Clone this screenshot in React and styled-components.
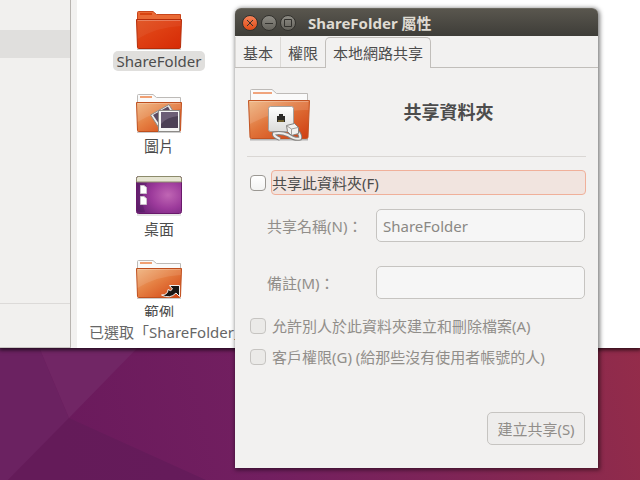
import React, { useState } from "react";
import styled, { createGlobalStyle, css } from "styled-components";

const GlobalStyle = createGlobalStyle`
  * {
    box-sizing: border-box;
  }

  html,
  body,
  #root {
    height: 100%;
  }

  body {
    margin: 0;
    overflow: hidden;
  }

  svg {
    flex: none;
  }

  body,
  button,
  input {
    font-family: "Noto Sans", "Noto Sans CJK TC", sans-serif;
    font-size: 15px;
    line-height: 20px;
    color: #4c4c4c;
  }
`;

const Desktop = styled.main`
  position: relative;
  min-height: 100%;
  overflow: hidden;
  background-color: #6b1b5d;
`;

const WallpaperSvg = styled.svg`
  position: absolute;
  width: 100%;
  height: 100%;
`;

/* file manager */

const FilesWindow = styled.section`
  position: absolute;
  top: 0;
  left: 0;
  right: 0;
  height: 348px;
  display: flex;
  background-color: #ffffff;
  box-shadow: 0 1px 4px 1px rgba(0, 0, 0, 0.7);
`;

const Sidebar = styled.nav`
  width: 71px;
  display: flex;
  flex-direction: column;
  padding-top: 30px;
  background-color: #f1f0ee;
  border-right: 1px solid #b8b4b0;
  border-bottom: 1px solid #c8c5c2;
`;

const SidebarRow = styled.div`
  height: 28px;
  background-color: #e0dfdd;
`;

const SidebarFooter = styled.div`
  height: 44px;
  margin-top: auto;
  border-top: 1px solid #dcdad8;
`;

const PaneHandle = styled.div`
  width: 6px;
  background-color: #f2f1f0;
`;

const FilesPane = styled.div`
  flex: 1;
  min-width: 0;
  display: flex;
  flex-direction: column;
`;

const IconView = styled.ul`
  flex: 1;
  min-height: 0;
  width: 164px;
  display: flex;
  flex-direction: column;
  gap: 21px;
  margin: 0;
  padding: 9px 0 0;
  overflow: hidden;
  list-style: none;
`;

const FileItem = styled.li`
  flex: none;
  height: 62px;
  display: flex;
  flex-direction: column;
  align-items: center;
`;

const FileLabel = styled.span`
  flex: none;
  padding: 0 4px;
  border-radius: 5px;
  line-height: 25px;

  ${({ $selected }) =>
    $selected &&
    css`
      line-height: 20px;
      background-color: #e0dfdd;
    `}
`;

const StatusBar = styled.div`
  height: 31px;
  padding: 5px 12px;
  color: #666666;
  white-space: nowrap;
`;

/* properties dialog */

const Dialog = styled.section`
  position: absolute;
  top: 8px;
  left: 235px;
  width: 363px;
  border-radius: 6px 6px 0 0;
  background-color: #f2f1f0;
  box-shadow: 1px 1px 4px 1px rgba(0, 0, 0, 0.5);
`;

const TitleBar = styled.header`
  height: 28px;
  display: flex;
  align-items: center;
  gap: 3px;
  padding: 0 7px;
  border-radius: 6px 6px 0 0;
  border-top: 1px solid #6a675e;
  background: linear-gradient(#59564e, #3e3d38);
`;

const WindowButton = styled.button`
  width: 16px;
  height: 16px;
  display: flex;
  padding: 0;
  border: 1px solid #33322e;
  border-radius: 50%;
  background: ${({ $close }) =>
    $close
      ? "linear-gradient(#f58258, #df4b16)"
      : "linear-gradient(#8d8b84, #65635c)"};
`;

const Title = styled.h1`
  margin: 0 0 0 9px;
  font-size: 15px;
  line-height: 20px;
  font-weight: bold;
  color: #dfdbd2;
`;

const TabList = styled.div`
  height: 32px;
  display: flex;
  align-items: flex-end;
  border-bottom: 1px solid #c1beba;
`;

const Tab = styled.button`
  height: 30px;
  padding: 2px 7px 0;
  border: solid #dbd9d6;
  border-width: 0 0 0 1px;
  background: none;

  ${({ $active }) =>
    $active &&
    css`
      height: 31px;
      margin-bottom: -1px;
      padding: 0 7px;
      border: 1px solid #c1beba;
      border-bottom: 0;
      border-radius: 5px 5px 0 0;
      background-color: #f2f1f0;
    `}
`;

const Panel = styled.form`
  display: flex;
  flex-direction: column;
  padding: 18px 12px 23px;
`;

const Intro = styled.div`
  display: flex;
  align-items: center;
  padding-bottom: 10px;
  border-bottom: 1px solid #dad7d4;
  margin-bottom: 13px;
`;

const Heading = styled.h2`
  flex: 1;
  margin: 0;
  padding-bottom: 8px;
  font-size: 18px;
  line-height: 24px;
  text-align: center;
`;

const CheckRow = styled.div`
  display: flex;
  align-items: center;
  gap: 5px;
  height: ${({ $short }) => ($short ? "25px" : "31px")};
  padding-left: 3px;
`;

const CheckBox = styled.input`
  appearance: none;
  flex: none;
  width: 16px;
  height: 16px;
  margin: 0;
  border: 1px solid #9b9893;
  border-radius: 4px;
  background: linear-gradient(#ffffff, #f3f3f2);

  &:checked {
    background: #f07746;
  }

  &:disabled {
    border-color: #c6c4c1;
    background: #ebeae8;
  }
`;

const CheckLabel = styled.label`
  flex: 1;
  padding: 2px 0 1px;
  border: 1px solid transparent;
  border-radius: 4px;
  white-space: nowrap;

  ${({ $focused }) =>
    $focused &&
    css`
      border-color: #f0b09a;
      background-color: #f1e4df;
    `}

  ${({ $disabled }) => $disabled && "color: #918e8a;"}
`;

const Fields = styled.div`
  display: grid;
  grid-template-columns: 109px 1fr;
  align-items: center;
  row-gap: 24px;
  padding: 14px 1px 11px 20px;
`;

const FieldLabel = styled.label`
  padding-top: 1px;
  color: #918e8a;
`;

const TextField = styled.input`
  width: 100%;
  height: 33px;
  padding: 0 6px;
  border: 1px solid #c6c4c1;
  border-radius: 5px;
  background-color: #f6f6f6;
  color: #8a8884;
`;

const Actions = styled.div`
  display: flex;
  justify-content: flex-end;
  padding: 40px 1px 0;
`;

const ActionButton = styled.button`
  min-width: 98px;
  height: 33px;
  padding: 1px 8px 0;
  border: 1px solid #c6c4c1;
  border-radius: 5px;
  background-color: #eeedec;

  &:disabled {
    color: #918e8a;
  }
`;

const Wallpaper = () => (
  <WallpaperSvg viewBox="0 0 640 480" preserveAspectRatio="none" aria-hidden="true">
    <defs>
      <linearGradient id="wall" x1="70" y1="480" x2="640" y2="340" gradientUnits="userSpaceOnUse">
        <stop offset="0" stopColor="#6a1a5c" />
        <stop offset="0.33" stopColor="#721f60" />
        <stop offset="0.6" stopColor="#7d2458" />
        <stop offset="0.8" stopColor="#87284f" />
        <stop offset="1" stopColor="#942c4a" />
      </linearGradient>
      <linearGradient id="wallLow" x1="60" y1="0" x2="500" y2="0" gradientUnits="userSpaceOnUse">
        <stop offset="0" stopColor="#641b59" />
        <stop offset="0.5" stopColor="#661b5b" />
        <stop offset="1" stopColor="#84275a" />
      </linearGradient>
    </defs>
    <rect width="640" height="480" fill="url(#wall)" />
    <path d="M0 340H36L69 418L8 480H0Z" fill="#6b2261" />
    <path d="M36 340H145L69 418Z" fill="#712665" />
    <path d="M69 418L8 480H206Z" fill="url(#wallLow)" />
  </WallpaperSvg>
);

const FolderShape = ({ red }) => {
  const id = red ? "red" : "orange";
  return (
    <>
      <defs>
        <linearGradient id={id} x1="0" y1="0" x2="1" y2="1">
          <stop offset="0" stopColor={red ? "#e0501e" : "#eeb27c"} />
          <stop offset="0.45" stopColor={red ? "#de3f12" : "#e57f42"} />
          <stop offset="1" stopColor={red ? "#d62a06" : "#d24212"} />
        </linearGradient>
      </defs>
      <path d="M2 40.5H46" stroke="#000" strokeOpacity="0.2" />
      <path
        d="M2.5 12V3.5Q2.5 2.5 3.5 2.5H18L21.5 5.5H45.5V12Z"
        fill={red ? "#ea6a35" : "#fafafa"}
        stroke={red ? "#c9451b" : "#bdbab7"}
      />
      <path d="M5 5H17" stroke={red ? "#d84410" : "#f0a073"} strokeWidth="2" />
      <path
        d="M1.5 10.5H46.5L45.5 38.5Q45.5 39.5 44.5 39.5H3.5Q2.5 39.5 2.5 38.5Z"
        fill={`url(#${id})`}
        stroke={red ? "#b52c08" : "#bf4f1e"}
      />
      <path d="M2.5 11.5H45.5" stroke="#fff" strokeOpacity="0.3" />
      <path d="M2 12H46V17Q22 18 2.5 30Z" fill="#fff" fillOpacity={red ? "0.05" : "0.1"} />
    </>
  );
};

const FileIcon = ({ kind }) => (
  <svg width="48" height="42" viewBox="0 0 48 42" aria-hidden="true">
    {kind === "desktop" ? (
      <>
        <defs>
          <radialGradient id="screen" cx="0.7" cy="0.5" r="0.75">
            <stop offset="0" stopColor="#c066b4" />
            <stop offset="0.5" stopColor="#9c3a9b" />
            <stop offset="1" stopColor="#6a2276" />
          </radialGradient>
        </defs>
        <path d="M2 40H46" stroke="#000" strokeOpacity="0.2" />
        <rect x="1.5" y="1.5" width="45" height="37" rx="2" fill="url(#screen)" stroke="#69196b" />
        <path d="M1.5 7V3.5Q1.5 1.5 3.5 1.5H44.5Q46.5 1.5 46.5 3.5V7Z" fill="#e6e5d2" stroke="#8c8b6b" />
        <path d="M2 12V37H10Q4 22 12 8H2Z" fill="#401650" fillOpacity="0.3" />
        <path d="M5.5 10.5H9L11.5 12.5V18.5H5.5ZM5.5 21.5H9L11.5 23.5V29.5H5.5Z" fill="#fff" stroke="#ccc0cc" />
      </>
    ) : (
      <FolderShape red={kind === "share"} />
    )}
    {kind === "pictures" && (
      <>
        <path d="M15.5 23L34 12.5L44 29L26 39Z" fill="#eeeeec" stroke="#8d8b88" />
        <path d="M18 23L33 14.5L40 27L26 35Z" fill="#5b4b63" />
        <rect x="23.5" y="18.5" width="21" height="21" fill="#f7f7f6" stroke="#8d8b88" />
        <rect x="26" y="20" width="17" height="16" fill="#4d4156" />
        <path d="M26 20H43V24Q32 25 26 32Z" fill="#8b7c93" fillOpacity="0.5" />
      </>
    )}
    {kind === "examples" && (
      <path
        d="M34.5 27.5H44.5V38.5L41 35Q35 41.5 26.5 37Q33 37 33 31.5Q36 34 37.5 31Z"
        fill="#1a1715"
        stroke="#f3efec"
      />
    )}
  </svg>
);

const cable = "M33 53Q26 50 27 47.5Q34 46 41 49Q48 54 53 52.5Q54 50 51 46";

const SharedFolderIcon = () => (
  <svg width="64" height="60" viewBox="0 0 64 60" aria-hidden="true">
    <defs>
      <linearGradient id="big" x1="0" y1="0" x2="1" y2="1">
        <stop offset="0" stopColor="#eeb27c" />
        <stop offset="0.45" stopColor="#e0743a" />
        <stop offset="1" stopColor="#cf3d10" />
      </linearGradient>
      <linearGradient id="plate" x1="0" y1="0" x2="0" y2="1">
        <stop offset="0" stopColor="#ffffff" />
        <stop offset="1" stopColor="#dcdcda" />
      </linearGradient>
    </defs>
    <path d="M3 53.5H61" stroke="#000" strokeOpacity="0.25" strokeWidth="2" />
    <path d="M3.5 16V4.5Q3.5 3.5 4.5 3.5H25L29.5 7.5H60.5V16Z" fill="#fafafa" stroke="#bdbab7" />
    <path d="M6 7H25" stroke="#f0a47c" strokeWidth="2" />
    <path d="M1.5 14.5H62.5L61 51Q61 52.5 59.5 52.5H4.5Q3 52.5 3 51Z" fill="url(#big)" stroke="#c25423" />
    <path d="M2.5 15.5H61.5" stroke="#fff" strokeOpacity="0.35" />
    <path d="M2.5 16H61.5V24Q30 23 3 38Z" fill="#fff" fillOpacity="0.12" />
    <rect x="21.5" y="20.5" width="25" height="25" rx="2" fill="url(#plate)" stroke="#a3a19e" />
    <path d="M30 30H32V28H36V30H38V36H30Z" fill="#2b2a28" />
    <path d="M31 35H37" stroke="#b3932e" />
    <path d={cable} fill="none" stroke="#85827f" strokeWidth="4" />
    <path d={cable} fill="none" stroke="#eeeeec" strokeWidth="2" />
    <path d="M39.5 39.5L47.5 37.5L51.5 41.5V47.5L44.5 49.5L40.5 45.5Z" fill="#f1f1ef" stroke="#85827f" />
    <path d="M40 40L44.5 43L51 41.5M44.5 43V49" fill="none" stroke="#a09e9b" />
  </svg>
);

const glyphs = {
  close: "M4 4L10 10M10 4L4 10",
  minimize: "M3 7.5H11",
  maximize: "M3.5 3.5H10.5V10.5H3.5Z",
};

const windowButtons = [
  { name: "close", label: "關閉" },
  { name: "minimize", label: "最小化" },
  { name: "maximize", label: "最大化" },
];

const files = [
  { name: "ShareFolder", kind: "share", selected: true },
  { name: "圖片", kind: "pictures" },
  { name: "桌面", kind: "desktop" },
  { name: "範例", kind: "examples" },
];

const tabs = ["基本", "權限", "本地網路共享"];

const App = () => {
  const [activeTab, setActiveTab] = useState(2);
  const [shared, setShared] = useState(false);
  const [shareName, setShareName] = useState("ShareFolder");
  const [comment, setComment] = useState("");

  return (
    <Desktop>
      <GlobalStyle />
      <Wallpaper />

      <FilesWindow>
        <Sidebar>
          <SidebarRow />
          <SidebarFooter />
        </Sidebar>
        <PaneHandle />
        <FilesPane>
          <IconView lang="zh-TW">
            {files.map((file) => (
              <FileItem key={file.name}>
                <FileIcon kind={file.kind} />
                <FileLabel $selected={file.selected}>{file.name}</FileLabel>
              </FileItem>
            ))}
          </IconView>
          <StatusBar lang="zh-TW">已選取「ShareFolder」</StatusBar>
        </FilesPane>
      </FilesWindow>

      <Dialog lang="zh-TW" role="dialog" aria-labelledby="dialog-title">
        <TitleBar>
          {windowButtons.map(({ name, label }) => (
            <WindowButton key={name} type="button" aria-label={label} $close={name === "close"}>
              <svg width="14" height="14" viewBox="0 0 14 14">
                <path d={glyphs[name]} fill="none" stroke="#33322e" />
              </svg>
            </WindowButton>
          ))}
          <Title id="dialog-title">ShareFolder 屬性</Title>
        </TitleBar>

        <TabList role="tablist">
          {tabs.map((tab, index) => (
            <Tab
              key={tab}
              type="button"
              role="tab"
              aria-selected={activeTab === index}
              $active={activeTab === index}
              onClick={() => setActiveTab(index)}
            >
              {tab}
            </Tab>
          ))}
        </TabList>

        <Panel onSubmit={(e) => e.preventDefault()}>
          <Intro>
            <SharedFolderIcon />
            <Heading>共享資料夾</Heading>
          </Intro>

          <CheckRow $short>
            <CheckBox
              type="checkbox"
              id="share"
              checked={shared}
              onChange={(e) => setShared(e.target.checked)}
            />
            <CheckLabel htmlFor="share" $focused>
              共享此資料夾(F)
            </CheckLabel>
          </CheckRow>

          <Fields>
            <FieldLabel htmlFor="name">共享名稱(N)：</FieldLabel>
            <TextField
              id="name"
              value={shareName}
              disabled={!shared}
              onChange={(e) => setShareName(e.target.value)}
            />
            <FieldLabel htmlFor="comment">備註(M)：</FieldLabel>
            <TextField
              id="comment"
              value={comment}
              disabled={!shared}
              onChange={(e) => setComment(e.target.value)}
            />
          </Fields>

          <CheckRow>
            <CheckBox type="checkbox" id="write" disabled={!shared} />
            <CheckLabel htmlFor="write" $disabled={!shared}>
              允許別人於此資料夾建立和刪除檔案(A)
            </CheckLabel>
          </CheckRow>
          <CheckRow>
            <CheckBox type="checkbox" id="guest" disabled={!shared} />
            <CheckLabel htmlFor="guest" $disabled={!shared}>
              客戶權限(G) (給那些沒有使用者帳號的人)
            </CheckLabel>
          </CheckRow>

          <Actions>
            <ActionButton type="submit" disabled={!shared}>
              建立共享(S)
            </ActionButton>
          </Actions>
        </Panel>
      </Dialog>
    </Desktop>
  );
};

export default App;
